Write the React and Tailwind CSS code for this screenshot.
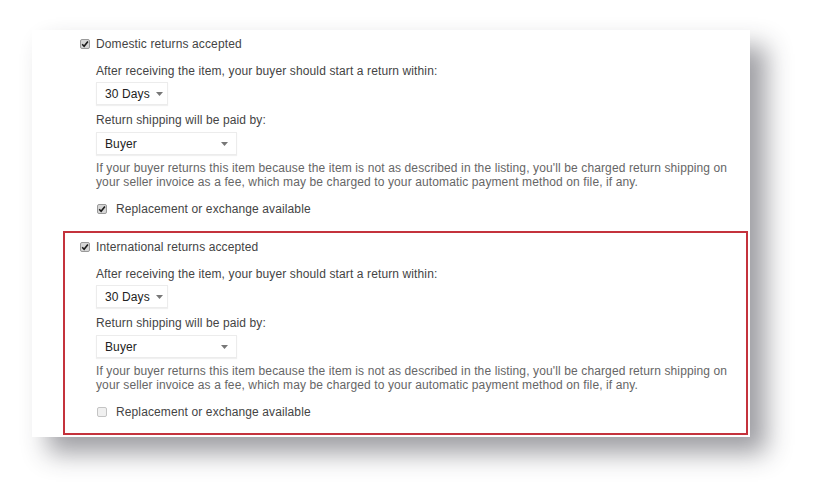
import React from "react";

function Check({ checked, className = "" }) {
  return (
    <span
      className={
        "inline-flex items-center justify-center w-[10px] h-[10px] rounded-[2px] border " +
        (checked ? "border-[#9a9a9a] bg-[#d6d6d6]" : "border-[#c4c4c4] bg-[#f0f0f0]") +
        " " +
        className
      }
    >
      {checked && (
        <svg width="8" height="8" viewBox="0 0 8 8">
          <path d="M1.2 4.3 L3.1 6.2 L6.9 1.4" fill="none" stroke="#1a1a1a" strokeWidth="1.6" />
        </svg>
      )}
    </span>
  );
}

function Caret() {
  return (
    <svg width="7" height="4" viewBox="0 0 7 4" className="ml-[6px]">
      <path d="M0 0 L7 0 L3.5 4 Z" fill="#777" />
    </svg>
  );
}

function Select({ label, wide }) {
  return (
    <div
      className={
        "flex items-center h-[23px] bg-white border border-[#ececec] shadow-[0_1px_1px_rgba(0,0,0,0.06)] pl-[8px] text-[#222] " +
        (wide ? "w-[141px] justify-between pr-[8px]" : "w-[72px]")
      }
    >
      <span>{label}</span>
      <Caret />
    </div>
  );
}

function Section({ title, replChecked }) {
  return (
    <div>
      <div className="flex items-center h-[14px] ml-[12px]">
        <Check checked />
        <span className="ml-[6px]">{title}</span>
      </div>
      <div className="pl-[28px]">
        <div className="mt-[13px] h-[14px]">After receiving the item, your buyer should start a return within:</div>
        <div className="mt-[4px]">
          <Select label="30 Days" />
        </div>
        <div className="mt-[8px] h-[14px]">Return shipping will be paid by:</div>
        <div className="mt-[5px]">
          <Select label="Buyer" wide />
        </div>
        <div className="mt-[6px] text-[#666] leading-[14px] whitespace-nowrap">
          If your buyer returns this item because the item is not as described in the listing, you'll be charged return shipping on
          <br />
          your seller invoice as a fee, which may be charged to your automatic payment method on file, if any.
        </div>
        <div className="mt-[13px] flex items-center h-[14px] ml-[1px]">
          <Check checked={replChecked} />
          <span className="ml-[9px]">Replacement or exchange available</span>
        </div>
      </div>
    </div>
  );
}

export default function App() {
  return (
    <div className="w-[814px] h-[504px] bg-white overflow-hidden font-['Liberation_Sans',Arial,sans-serif] text-[12px] tracking-[0.12px] leading-[14px] text-[#444]">
      <div className="ml-[32px] mt-[30px] w-[718px] h-[407px] bg-white shadow-[16px_16px_24px_rgba(40,40,50,0.45)] pt-[7px]">
        <div className="pl-[36px]">
          <Section title="Domestic returns accepted" replChecked />
        </div>
        <div className="mt-[15px] ml-[31px] mr-[2px] h-[204px] border-2 border-[#c4323c] pt-[7px] pl-[3px]">
          <Section title="International returns accepted" replChecked={false} />
        </div>
      </div>
    </div>
  );
}
